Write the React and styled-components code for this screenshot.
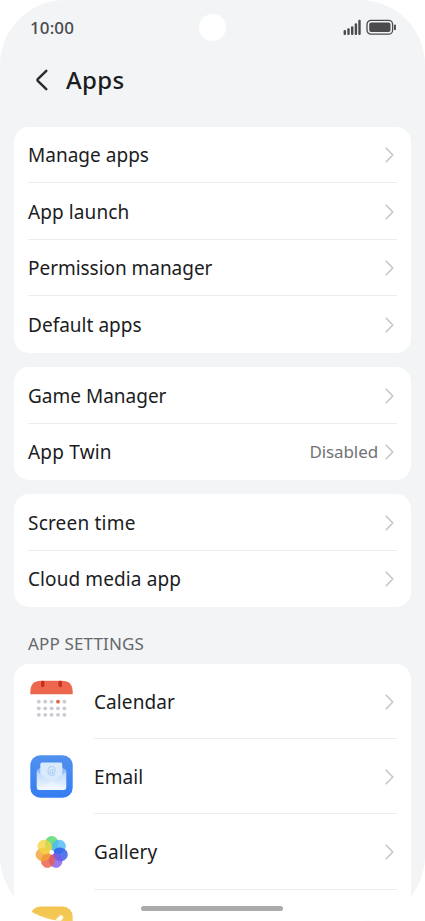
import React from 'react'
import styled, { createGlobalStyle } from 'styled-components'

const groups = [
  [
    { name: 'Manage apps', spacing: 0.02 },
    { name: 'App launch', spacing: 0.1 },
    { name: 'Permission manager', spacing: -0.04 },
    { name: 'Default apps', spacing: 0.02 },
  ],
  [
    { name: 'Game Manager', spacing: 0 },
    { name: 'App Twin', value: 'Disabled', spacing: 0.2 },
  ],
  [
    { name: 'Screen time', spacing: 0.2 },
    { name: 'Cloud media app', spacing: 0.1 },
  ],
]

const Chevron = () => (
  <ChevronIcon viewBox='0 0 9 16'>
    <path d='M1.2 1.2 L7.8 8 L1.2 14.8' />
  </ChevronIcon>
)

const Signal = () => (
  <svg width='19' height='17' viewBox='0 0 19 17' fill='#4b4b4d'>
    <rect x='0.6' y='11' width='2.4' height='5' rx='1' />
    <rect x='4.3' y='9.2' width='2.4' height='6.8' rx='1' />
    <rect x='8' y='7.2' width='2.4' height='8.8' rx='1' />
    <rect x='11.7' y='4.2' width='2.4' height='11.8' rx='1' />
    <rect x='15.3' y='0.8' width='2.4' height='15.2' rx='1' />
  </svg>
)

const Battery = () => (
  <svg width='31' height='17' viewBox='0 0 31 17'>
    <rect x='1' y='1.4' width='25.6' height='13.8' rx='4' fill='none' stroke='#4b4b4d' strokeWidth='1.3' />
    <rect x='3.2' y='3.6' width='21.3' height='9.4' rx='2' fill='#4b4b4d' />
    <rect x='28' y='5.5' width='1.9' height='5.6' rx='0.9' fill='#4b4b4d' />
  </svg>
)

const CalendarIcon = () => (
  <svg width='43' height='43' viewBox='0 0 43 43'>
    <path d='M0.3 14.2 V12 C0.3 4.5 4 0.7 11 0.7 H32 C39 0.7 42.7 4.5 42.7 12 V14.2 Z' fill='#ec674e' />
    <rect x='11' y='0.7' width='3.4' height='6.2' rx='1.5' fill='#ca2d20' />
    <rect x='28.5' y='0.7' width='3.4' height='6.2' rx='1.5' fill='#ca2d20' />
    {[21.7, 28.3, 34.8].map((y, row) =>
      [8.8, 15.2, 21.6, 28, 34.4].map((x) => (
        <circle
          key={`${x}-${y}`}
          cx={x}
          cy={y}
          r='1.9'
          fill={x === 28 && row === 0 ? '#e0633f' : '#c9cad2'}
        />
      ))
    )}
  </svg>
)

const EmailIcon = () => (
  <svg width='43' height='43' viewBox='0 0 43 43'>
    <defs>
      <linearGradient id='mailBg' x1='0' y1='0' x2='0' y2='1'>
        <stop offset='0' stopColor='#5090ee' />
        <stop offset='1' stopColor='#367df2' />
      </linearGradient>
      <linearGradient id='mailFront' x1='0' y1='0' x2='0' y2='1'>
        <stop offset='0' stopColor='#b9d8fa' />
        <stop offset='1' stopColor='#f2f8ff' />
      </linearGradient>
    </defs>
    <rect x='0.3' y='0.3' width='42.4' height='42.4' rx='10' fill='url(#mailBg)' />
    <path d='M6.8 15 L11 12.5 H32 L36.2 15 V32 H6.8 Z' fill='#91bdf7' />
    <rect x='10.3' y='7.6' width='22' height='24' rx='2' fill='#d9eafc' />
    <path d='M6.8 16.5 L21.5 27.5 L36.2 16.5 V32.5 Q36.2 35 33.7 35 H9.3 Q6.8 35 6.8 32.5 Z' fill='url(#mailFront)' />
    <path d='M8 34.4 L19.5 27.6 Q21.5 26.4 23.5 27.6 L35 34.4' fill='#f4f9ff' opacity='0.6' />
    <text x='21.5' y='19.2' textAnchor='middle' fontSize='10.5' fontFamily='Lato, sans-serif' fill='#9fc3ee'>@</text>
  </svg>
)

const petals = ['#53d769', '#4ab8f7', '#2858e8', '#8158e5', '#ed5a45', '#f3a133', '#f2d442']

const GalleryIcon = () => (
  <svg width='43' height='43' viewBox='0 0 43 43'>
    {petals.map((color, i) => (
      <ellipse
        key={color}
        cx='21.7'
        cy='13.7'
        rx='6.8'
        ry='7.7'
        fill={color}
        fillOpacity='0.8'
        transform={`rotate(${(i * 360) / 7} 21.7 22.4)`}
      />
    ))}
    <circle cx='21.7' cy='22.4' r='2.4' fill='#fff' />
  </svg>
)

const NotesIcon = () => (
  <svg width='43' height='43' viewBox='0 0 43 43'>
    <defs>
      <linearGradient id='notesBg' x1='0' y1='0' x2='0' y2='1'>
        <stop offset='0' stopColor='#f2c44f' />
        <stop offset='1' stopColor='#fbd66b' />
      </linearGradient>
    </defs>
    <rect x='0.3' y='0.6' width='42.4' height='42.4' rx='10' fill='url(#notesBg)' />
    <path d='M10 33 L31 11.5' stroke='#fffdf4' strokeWidth='4.5' strokeLinecap='round' />
  </svg>
)

const apps = [
  { name: 'Calendar', icon: <CalendarIcon /> },
  { name: 'Email', icon: <EmailIcon /> },
  { name: 'Gallery', icon: <GalleryIcon /> },
  { name: '', icon: <NotesIcon /> },
]

const App = () => {
  return (
    <>
      <GlobalStyle />
      <Screen>
        <StatusBar>
          <Time>10:00</Time>
          <StatusIcons>
            <Signal />
            <Battery />
          </StatusIcons>
          <Camera />
        </StatusBar>
        <Header>
          <svg width='14' height='22' viewBox='0 0 14 22'>
            <path
              d='M11.3 1.8 L2.8 10 Q2 11 2.8 12 L11.3 20.2'
              fill='none'
              stroke='#2c2d2f'
              strokeWidth='2.5'
              strokeLinecap='round'
            />
          </svg>
          <h1>Apps</h1>
        </Header>
        <Content>
          {groups.map((rows) => (
            <Card key={rows[0].name}>
              {rows.map(({ name, value, spacing }) => (
                <Row key={name}>
                  <Name $spacing={spacing}>{name}</Name>
                  {value && <Value>{value}</Value>}
                  <Chevron />
                </Row>
              ))}
            </Card>
          ))}
          <SectionTitle>APP SETTINGS</SectionTitle>
          <Card $last>
            {apps.map(({ name, icon }, i) => (
              <AppRow key={i}>
                {icon}
                <AppBody>
                  <Name $spacing={0.1}>{name}</Name>
                  {name && <Chevron />}
                </AppBody>
              </AppRow>
            ))}
          </Card>
        </Content>
        <HomeBar />
      </Screen>
    </>
  )
}

const GlobalStyle = createGlobalStyle`
  * {
    box-sizing: border-box;
  }
  body {
    margin: 0;
    background: #fff;
    font-family: 'Noto Sans', 'Open Sans', sans-serif;
    color: #1b1c1e;
    overflow: hidden;
  }
`

const Screen = styled.main`
  position: relative;
  width: 425px;
  height: 921px;
  display: flex;
  flex-direction: column;
  background: #f2f4f6;
  border-radius: 65px;
  overflow: hidden;
`

const StatusBar = styled.div`
  position: relative;
  flex: none;
  height: 54px;
  padding: 0 28px 0 30px;
  display: flex;
  align-items: center;
  justify-content: space-between;
`

const Time = styled.span`
  padding-top: 1px;
  font-size: 17px;
  font-weight: 500;
  line-height: 24px;
  letter-spacing: 0.1px;
  color: #4b4b4d;
`

const StatusIcons = styled.div`
  display: flex;
  align-items: center;
  gap: 4px;
`

const Camera = styled.div`
  position: absolute;
  top: 14px;
  left: 199px;
  width: 27px;
  height: 27px;
  border-radius: 50%;
  background: #fff;
`

const Header = styled.header`
  flex: none;
  height: 72.6px;
  padding: 0 0 20.6px 35px;
  display: flex;
  align-items: center;
  gap: 17px;
  h1 {
    margin: 0;
    font-size: 24px;
    font-weight: 500;
    line-height: 32px;
    letter-spacing: 0.3px;
  }
`

const Content = styled.div`
  padding: 0 14px;
  display: flex;
  flex-direction: column;
  gap: 14px;
`

const Card = styled.section`
  flex: none;
  padding: 0 14px;
  border-radius: ${({ $last }) => ($last ? '15px 15px 0 0' : '15px')};
  background: #fff;
`

const Row = styled.div`
  height: 56.6px;
  padding-top: 1.6px;
  display: flex;
  align-items: center;
  border-bottom: 1px solid #ededee;
  &:last-child {
    padding-top: 0.6px;
    border-bottom: 0;
  }
`

const Name = styled.span`
  flex: 1;
  font-size: 19px;
  line-height: 26px;
  letter-spacing: ${({ $spacing }) => $spacing || 0}px;
  white-space: nowrap;
`

const Value = styled.span`
  margin-right: 7px;
  padding-bottom: 1px;
  font-size: 17px;
  letter-spacing: -0.1px;
  color: #727274;
`

const ChevronIcon = styled.svg`
  flex: none;
  width: 9px;
  height: 16px;
  margin-right: 3px;
  fill: none;
  stroke: #c5c6c8;
  stroke-width: 1.6;
  stroke-linecap: round;
  stroke-linejoin: round;
`

const SectionTitle = styled.h2`
  margin: 0;
  padding: 15.4px 14px 0;
  font-size: 17px;
  font-weight: 400;
  line-height: 14px;
  letter-spacing: 0.15px;
  color: #666769;
  margin-bottom: -1px;
`

const AppRow = styled.div`
  height: 75.3px;
  padding-left: 2px;
  display: flex;
  align-items: center;
  gap: 21px;
`

const AppBody = styled.div`
  flex: 1;
  height: 100%;
  padding-top: 2px;
  display: flex;
  align-items: center;
  border-bottom: 1px solid #ededee;
`

const HomeBar = styled.div`
  position: absolute;
  left: 141px;
  bottom: 10.5px;
  width: 142px;
  height: 5px;
  border-radius: 3px;
  background: #ababab;
`

export default App
